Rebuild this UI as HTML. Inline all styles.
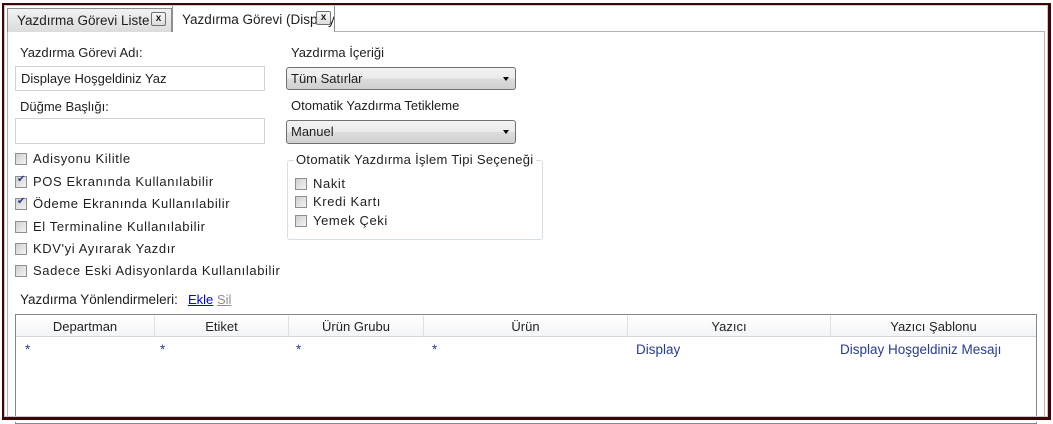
<!DOCTYPE html>
<html><head><meta charset="utf-8"><style>
*{box-sizing:border-box;margin:0;padding:0}
body{width:1053px;height:422px;background:#fff;position:relative;overflow:hidden;font-family:"Liberation Sans",sans-serif;font-size:13px;color:#1e1e1e}
.a{position:absolute;white-space:nowrap}
.cb{position:absolute;width:12px;height:12px;border:1px solid #8e8f8f;background:linear-gradient(135deg,#cfcfcf,#f4f4f4)}
.cb.c::after{content:"✔";position:absolute;left:1px;top:-3px;font-size:10px;color:#2a3a8a}
.lb{letter-spacing:0.6px}
.input{position:absolute;border:1px solid #d0d4da;background:#fff}
.combo{position:absolute;border:1px solid #707070;border-radius:3px;background:linear-gradient(#f2f2f2,#ebebeb 50%,#dddddd 51%,#cfcfcf)}
.combo span{position:absolute;left:4px;top:3px}
.combo i{position:absolute;right:6px;top:9px;border-left:3px solid transparent;border-right:3px solid transparent;border-top:4px solid #000}
.xb{position:absolute;width:15px;height:14px;border:1px solid #707070;border-radius:2px;background:linear-gradient(#fafafa,#dcdcdc);font-size:10px;font-weight:bold;text-align:center;line-height:12px}
.hd{position:absolute;top:316px;height:21px;border-right:1px solid #dde0e4;text-align:center;line-height:21px;color:#222;font-size:13px}
.d{position:absolute;top:342px;color:#283c8c;font-size:13.5px}
</style></head><body>
<div class="a" style="left:7px;top:31px;width:1038px;height:390px;border:1px solid #b4b4b4;border-bottom:none"></div>
<div class="a" style="left:173px;top:31px;width:161px;height:2px;background:#fff"></div>
<!-- tabs -->
<div class="a" style="left:7px;top:8px;width:165px;height:24px;border:1px solid #8c8e94;border-bottom:none;background:linear-gradient(#f2f2f2,#dcdcdc);overflow:hidden"><span class="a" style="left:9px;top:4px;font-size:13.5px">Yazdırma Görevi Liste</span></div>
<div class="xb" style="left:151px;top:12px">x</div>
<div class="a" style="left:172px;top:5px;width:163px;height:27px;border:1px solid #8c8e94;border-bottom:none;background:#fff;overflow:hidden"><span class="a" style="left:9px;top:6px;font-size:13.5px">Yazdırma Görevi (Display</span></div>
<div class="xb" style="left:316px;top:11px">x</div>

<div class="a" style="left:20px;top:45px">Yazdırma Görevi Adı:</div>
<div class="input" style="left:15px;top:66px;width:250px;height:25px"><span class="a" style="left:5px;top:4px">Displaye Hoşgeldiniz Yaz</span></div>
<div class="a" style="left:20px;top:99px">Düğme Başlığı:</div>
<div class="input" style="left:15px;top:118px;width:250px;height:26px"></div>

<div class="cb" style="left:15px;top:153px"></div><div class="a lb" style="left:33px;top:151px">Adisyonu Kilitle</div>
<div class="cb c" style="left:15px;top:176px"></div><div class="a lb" style="left:33px;top:174px">POS Ekranında Kullanılabilir</div>
<div class="cb c" style="left:15px;top:198px"></div><div class="a lb" style="left:33px;top:196px">Ödeme Ekranında Kullanılabilir</div>
<div class="cb" style="left:15px;top:221px"></div><div class="a lb" style="left:33px;top:219px">El Terminaline Kullanılabilir</div>
<div class="cb" style="left:15px;top:243px"></div><div class="a lb" style="left:33px;top:241px">KDV'yi Ayırarak Yazdır</div>
<div class="cb" style="left:15px;top:265px"></div><div class="a lb" style="left:33px;top:263px">Sadece Eski Adisyonlarda Kullanılabilir</div>

<div class="a" style="left:291px;top:45px">Yazdırma İçeriği</div>
<div class="combo" style="left:286px;top:67px;width:230px;height:23px"><span>Tüm Satırlar</span><i></i></div>
<div class="a" style="left:291px;top:98px">Otomatik Yazdırma Tetikleme</div>
<div class="combo" style="left:286px;top:120px;width:230px;height:24px"><span>Manuel</span><i></i></div>
<div class="a" style="left:287px;top:160px;width:256px;height:80px;border:1px solid #d5dfe5;border-radius:3px"></div>
<div class="a" style="left:294px;top:152px;background:#fff;padding:0 2px;letter-spacing:0.3px">Otomatik Yazdırma İşlem Tipi Seçeneği</div>
<div class="cb" style="left:295px;top:178px"></div><div class="a lb" style="left:313px;top:176px">Nakit</div>
<div class="cb" style="left:295px;top:196px"></div><div class="a lb" style="left:313px;top:194px">Kredi Kartı</div>
<div class="cb" style="left:295px;top:215px"></div><div class="a lb" style="left:313px;top:213px">Yemek Çeki</div>

<div class="a" style="left:20px;top:292px;font-size:13.5px">Yazdırma Yönlendirmeleri:</div>
<div class="a" style="left:188px;top:292px;color:#0000ee;text-decoration:underline">Ekle</div>
<div class="a" style="left:217px;top:292px;color:#8c8c8c;text-decoration:underline">Sil</div>

<div class="a" style="left:15px;top:314px;width:1022px;height:110px;border:1px solid #828790"></div>
<div class="a" style="left:16px;top:315px;width:1020px;height:22px;background:linear-gradient(#fff,#f4f5f7);border-bottom:1px solid #d5d5d5"></div>
<div class="hd" style="left:16px;width:139px">Departman</div>
<div class="hd" style="left:155px;width:134px">Etiket</div>
<div class="hd" style="left:289px;width:135px">Ürün Grubu</div>
<div class="hd" style="left:424px;width:204px">Ürün</div>
<div class="hd" style="left:628px;width:203px">Yazıcı</div>
<div class="hd" style="left:831px;width:205px;border-right:none">Yazıcı Şablonu</div>
<div class="d" style="left:25px">*</div>
<div class="d" style="left:160px">*</div>
<div class="d" style="left:296px">*</div>
<div class="d" style="left:432px">*</div>
<div class="d" style="left:636px">Display</div>
<div class="d" style="left:840px">Display Hoşgeldiniz Mesajı</div>

<!-- outer frame (on top) -->
<div class="a" style="left:0;top:417px;width:1053px;height:5px;background:#fff"></div>
<div class="a" style="left:1051px;top:0;width:2px;height:422px;background:#fff"></div>
<div class="a" style="left:2px;top:3px;width:1049px;height:417px;border:2px solid #3c0505;border-right-width:3px;border-bottom-width:3px"></div>
<div class="a" style="left:4px;top:5px;width:1044px;height:412px;border:1px solid #c8c8c8"></div>
</body></html>
